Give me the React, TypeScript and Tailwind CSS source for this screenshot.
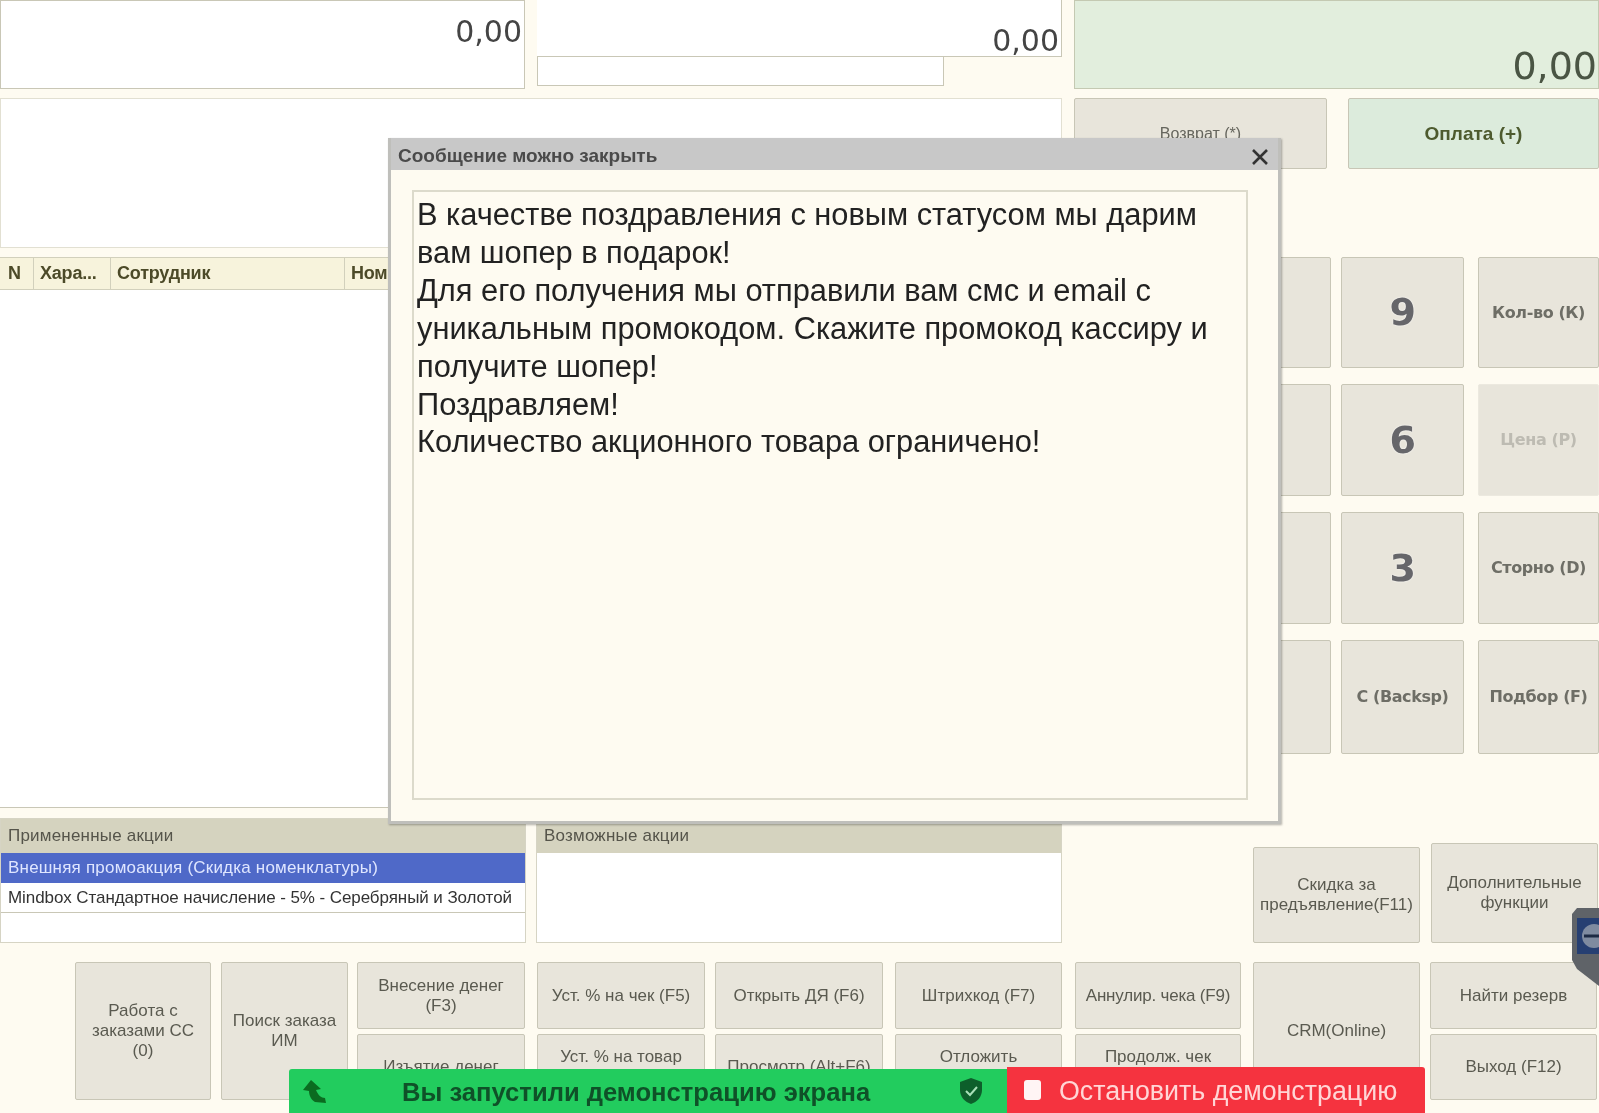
import { ReactNode } from 'react'
import { twMerge } from 'tailwind-merge'

const modalLines = [
  'В качестве поздравления с новым статусом мы дарим',
  'вам шопер в подарок!',
  'Для его получения мы отправили вам смс и email с',
  'уникальным промокодом. Скажите промокод кассиру и',
  'получите шопер!',
  'Поздравляем!',
  'Количество акционного товара ограничено!',
]

function Btn({ className = '', children }: { className?: string; children?: ReactNode }) {
  return (
    <div
      className={twMerge(
        'flex items-center justify-center text-center rounded-[2px] border border-[#c8c6b6] bg-[#e8e5db] text-[#5a5a50] text-[17px] leading-[20px] overflow-hidden',
        className,
      )}
    >
      {children}
    </div>
  )
}

function KeyBtn({ children, disabled, className = '' }: { children?: ReactNode; disabled?: boolean; className?: string }) {
  return (
    <div
      className={twMerge(
        "flex items-center justify-center rounded-[2px] border bg-[#e8e5db] font-['DejaVu_Sans'] text-[16px] font-bold tracking-[-0.4px]",
        disabled ? 'border-[#ece9df] text-[#bdbbb2]' : 'border-[#c8c6b6] text-[#6e6e66]',
        className,
      )}
    >
      {children}
    </div>
  )
}

function Digit({ children }: { children: ReactNode }) {
  return <span className="text-[38px] font-bold text-[#66666a] [text-shadow:0_0_2px_#fff]">{children}</span>
}

function PromoBox({ title, children }: { title: string; children?: ReactNode }) {
  return (
    <div className="flex-1 h-full flex flex-col bg-white border border-[#d6d4c4]">
      <div className="h-[34px] shrink-0 flex items-center px-[7px] bg-[#d5d3bf] text-[#55544a] text-[17px] tracking-[0.2px]">{title}</div>
      {children}
    </div>
  )
}

function ArrowIcon() {
  return (
    <svg width="24" height="23" viewBox="0 0 24 23" fill="#0b6b20">
      <path d="M8 0 L0 10 L6 11 C6 15 8 20 12 22 L23 23 L22 18 C18 18 15 15 13 10 L18 9 Z" />
    </svg>
  )
}

function ShieldIcon() {
  return (
    <svg width="24" height="28" viewBox="0 0 24 28">
      <path d="M12 1 L23 5 V13 C23 20 18 25 12 27 C6 25 1 20 1 13 V5 Z" fill="#0d5f2b" />
      <path d="M7 14 L11 18 L18 10" fill="none" stroke="#a9e0b8" strokeWidth="2" />
    </svg>
  )
}

function RemoteHandle() {
  return (
    <svg width="27" height="78" viewBox="0 0 27 78">
      <path d="M5 0 H27 V78 L5 61 L0 52 V6 Z" fill="#5f6368" />
      <rect x="5" y="10" width="22" height="36" fill="#263f72" />
      <circle cx="22" cy="28" r="12" fill="#7f8ba0" />
      <path d="M12 28 H27" stroke="#1d2a44" strokeWidth="3" />
    </svg>
  )
}

export default function App() {
  return (
    <div className="relative w-[1599px] h-[1113px] overflow-hidden bg-[#fefbf1] font-['Liberation_Sans',sans-serif] blur-[0.7px]">
      <div className="flex h-[943px]">
        {/* Left side */}
        <div className="w-[1062px] flex flex-col">
          <div className="flex h-[89px] gap-[12px]">
            <div className="w-[525px] flex justify-end bg-white border border-[#c9c7b6] pr-[2px] pt-[12px] font-['DejaVu_Sans'] text-[30px] leading-[38px] text-[#444]">
              0,00
            </div>
            <div className="flex-1 flex flex-col">
              <div className="h-[57px] flex justify-end items-end bg-white border-b border-r border-[#c9c7b6] pr-[2px] font-['DejaVu_Sans'] text-[30px] leading-[30px] text-[#444]">
                0,00
              </div>
              <div className="w-[407px] h-[29px] bg-white border border-t-0 border-[#c9c7b6]" />
            </div>
          </div>
          <div className="mt-[9px] h-[150px] bg-white border border-[#e2e0d2]" />
          <div className="mt-[9px] h-[551px] flex flex-col bg-white border-b border-[#c9c7b6]">
            <div className="h-[33px] flex bg-[#f7f3dc] border-y border-[#d2d0bc] text-[18px] tracking-[-0.2px] font-bold text-[#4c4a28]">
              <div className="w-[34px] flex items-center pl-[8px] border-r border-[#d2d0bc]">N</div>
              <div className="w-[77px] flex items-center pl-[6px] border-r border-[#d2d0bc]">Хара...</div>
              <div className="w-[234px] flex items-center pl-[6px] border-r border-[#d2d0bc]">Сотрудник</div>
              <div className="flex-1 flex items-center pl-[6px]">Ном</div>
            </div>
          </div>
          <div className="mt-[10px] h-[125px] flex gap-[10px]">
            <PromoBox title="Примененные акции">
              <div className="h-[30px] flex items-center px-[7px] bg-[#4f69c8] text-[#dfe6ff] text-[17px] tracking-[0.2px]">
                Внешняя промоакция (Скидка номенклатуры)
              </div>
              <div className="h-[30px] flex items-center px-[7px] border-b border-[#c9c7b6] text-[#333] text-[17px] tracking-[-0.08px]">
                Mindbox Стандартное начисление - 5% - Серебряный и Золотой
              </div>
            </PromoBox>
            <PromoBox title="Возможные акции" />
          </div>
        </div>

        {/* Right side */}
        <div className="flex-1 ml-[12px] flex flex-col">
          <div className="h-[89px] flex items-end justify-end bg-[#e2eedd] border border-[#c4c9b2] pr-[1px] font-['DejaVu_Sans'] text-[38px] leading-[44px] text-[#4a5544]">
            0,00
          </div>
          <div className="mt-[9px] h-[71px] flex gap-[21px]">
            <Btn className="w-[253px] text-[16px] text-[#66665e]">Возврат (*)</Btn>
            <Btn className="flex-1 bg-[#dcebdc] font-bold text-[19px] pt-[1px] text-[#4d5a2e]">Оплата (+)</Btn>
          </div>
          <div className="mt-[88px] grid grid-cols-[123px_123px_121px] grid-rows-[111px_112px_112px_114px] gap-x-[14px] gap-y-[16px] justify-end">
            <KeyBtn className="-mr-[4px]" />
            <KeyBtn><Digit>9</Digit></KeyBtn>
            <KeyBtn>Кол-во (К)</KeyBtn>
            <KeyBtn className="-mr-[4px]" />
            <KeyBtn><Digit>6</Digit></KeyBtn>
            <KeyBtn disabled>Цена (Р)</KeyBtn>
            <KeyBtn className="-mr-[4px]" />
            <KeyBtn><Digit>3</Digit></KeyBtn>
            <KeyBtn>Сторно (D)</KeyBtn>
            <KeyBtn className="-mr-[4px]" />
            <KeyBtn>С (Backsp)</KeyBtn>
            <KeyBtn>Подбор (F)</KeyBtn>
          </div>
          <div className="mt-auto flex justify-end gap-[11px] items-end">
            <Btn className="w-[167px] h-[96px]">
              Скидка за<br />предъявление(F11)
            </Btn>
            <Btn className="w-[167px] h-[100px] mr-[1px]">
              Дополнительные<br />функции
            </Btn>
          </div>
        </div>
      </div>

      {/* Bottom buttons */}
      <div className="mt-[19px] ml-[75px] h-[138px] flex gap-[9px]">
        <Btn className="w-[136px]">
          Работа с<br />заказами СС<br />(0)
        </Btn>
        <Btn className="w-[127px] ml-[1px]">
          Поиск заказа<br />ИМ
        </Btn>
        <div className="w-[168px] flex flex-col gap-[5px]">
          <Btn className="h-[67px]">
            Внесение денег<br />(F3)
          </Btn>
          <Btn className="h-[66px]">Изъятие денег</Btn>
        </div>
        <div className="w-[168px] ml-[3px] flex flex-col gap-[5px]">
          <Btn className="h-[67px]">Уст. % на чек (F5)</Btn>
          <Btn className="h-[66px] items-start pt-[12px]">Уст. % на товар</Btn>
        </div>
        <div className="w-[168px] ml-[1px] flex flex-col gap-[5px]">
          <Btn className="h-[67px]">Открыть ДЯ (F6)</Btn>
          <Btn className="h-[66px]">Просмотр (Alt+F6)</Btn>
        </div>
        <div className="w-[167px] ml-[3px] flex flex-col gap-[5px]">
          <Btn className="h-[67px]">Штрихкод (F7)</Btn>
          <Btn className="h-[66px] items-start pt-[12px]">Отложить</Btn>
        </div>
        <div className="w-[166px] ml-[4px] flex flex-col gap-[5px]">
          <Btn className="h-[67px] tracking-[-0.2px]">Аннулир. чека (F9)</Btn>
          <Btn className="h-[66px] items-start pt-[12px]">Продолж. чек</Btn>
        </div>
        <Btn className="w-[167px] ml-[3px]">CRM(Online)</Btn>
        <div className="w-[167px] ml-[1px] flex flex-col gap-[5px]">
          <Btn className="h-[67px]">Найти резерв</Btn>
          <Btn className="h-[66px]">Выход (F12)</Btn>
        </div>
      </div>

      {/* Message window */}
      <div className="absolute left-[388px] top-[138px] w-[893px] h-[686px] flex flex-col bg-[#fefbf1] border-[3px] border-t-0 border-[#bfbfbb] shadow-[1px_1px_2px_rgba(0,0,0,0.3)]">
        <div className="h-[32px] shrink-0 flex items-center justify-between pl-[7px] pr-[10px] pt-[5px] bg-[#c8c8c8] text-[19px] font-bold text-[#4a4a4a]">
          <span>Сообщение можно закрыть</span>
          <svg width="16" height="16" viewBox="0 0 16 16" stroke="#333" strokeWidth="2.6">
            <path d="M1 1 L15 15 M15 1 L1 15" />
          </svg>
        </div>
        <div className="mt-[20px] ml-[21px] w-[836px] h-[610px] border-2 border-[#dcdacb] pl-[3px] pt-[4px] text-[30.8px] leading-[37.9px] text-[#222]">
          {modalLines.map((line) => (
            <div key={line}>{line}</div>
          ))}
        </div>
      </div>

      {/* Screen sharing bar */}
      <div className="absolute left-[289px] bottom-0 h-[44px] w-[718px] flex items-center bg-[#22cc5e] rounded-tl-[3px] pl-[14px] pr-[24px]">
        <ArrowIcon />
        <span className="ml-[75px] pt-[3px] text-[25.6px] font-bold text-[#0f5128]">Вы запустили демонстрацию экрана</span>
        <span className="ml-auto">
          <ShieldIcon />
        </span>
      </div>
      <div className="absolute left-[1007px] bottom-0 h-[46px] w-[418px] flex items-center bg-[#f5333f] rounded-tr-[3px] pl-[17px]">
        <span className="w-[17px] h-[20px] rounded-[3px] bg-[#fff5f5]" />
        <span className="ml-[18px] pt-[3px] text-[26.8px] text-[#ffd6d6]">Остановить демонстрацию</span>
      </div>

      <div className="absolute right-0 top-[908px]">
        <RemoteHandle />
      </div>
    </div>
  )
}
